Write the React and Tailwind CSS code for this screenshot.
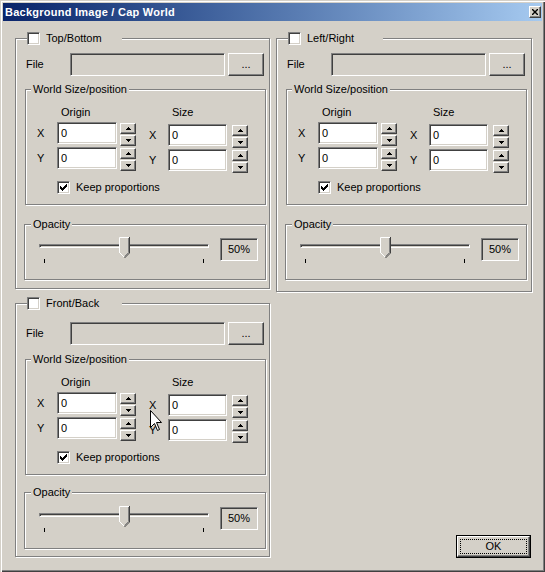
import React from "react";

const raised =
  "bg-[#d4d0c8] border border-t-white border-l-white border-r-[#404040] border-b-[#404040] shadow-[inset_-1px_-1px_0_#808080]";
const sunken =
  "border border-t-[#808080] border-l-[#808080] border-r-white border-b-white shadow-[inset_1px_1px_0_#404040,inset_-1px_-1px_0_#d4d0c8]";
const etched = "border border-[#808080] shadow-[inset_1px_1px_0_#fff,1px_1px_0_#fff]";

function CheckBox({ checked }) {
  return (
    <span className={`w-[13px] h-[13px] shrink-0 bg-white flex items-center justify-center ${sunken}`}>
      {checked && (
        <svg width="7" height="7" viewBox="0 0 7 7" shapeRendering="crispEdges">
          <path
            d="M6 0h1v1h-1z M5 1h2v1h-2z M0 2h1v1h-1z M4 2h3v1h-3z M0 3h2v1h-2z M3 3h3v1h-3z M0 4h5v1h-5z M1 5h3v1h-3z M2 6h1v1h-1z"
            fill="#000"
          />
        </svg>
      )}
    </span>
  );
}

function Arrow({ up }) {
  return (
    <svg width="5" height="3" viewBox="0 0 5 3" shapeRendering="crispEdges">
      <path d={up ? "M2 0h1v1h-1z M1 1h3v1h-3z M0 2h5v1h-5z" : "M0 0h5v1h-5z M1 1h3v1h-3z M2 2h1v1h-1z"} fill="#000" />
    </svg>
  );
}

function Spin({ className }) {
  return (
    <div className={`mt-[1px] flex flex-col gap-[1px] ${className}`}>
      <div className={`w-[16px] h-[11px] flex items-center justify-center ${raised}`}>
        <Arrow up />
      </div>
      <div className={`w-[16px] h-[11px] flex items-center justify-center ${raised}`}>
        <Arrow />
      </div>
    </div>
  );
}

function Field({ axis, wide }) {
  return (
    <div className="flex h-[25px]">
      <span className={`${wide ? "w-[20px]" : "w-[19px]"} leading-[22px]`}>{axis}</span>
      <div className={`${wide ? "w-[60px]" : "w-[59px]"} h-[22px] bg-white pl-[3px] leading-[20px] ${sunken}`}>0</div>
      <Spin className={wide ? "ml-[3px]" : "ml-[5px]"} />
    </div>
  );
}

function Slider() {
  return (
    <div className="relative w-[170px] h-[26px]">
      <div className={`mt-[7px] h-[4px] ${sunken}`} />
      <svg className="absolute left-[80px] top-0" width="11" height="21" viewBox="0 0 11 21">
        <polygon points="0,0 11,0 11,16 5.5,21 0,16" fill="#d4d0c8" />
        <path d="M0.5 16 V0.5 H10" stroke="#fff" fill="none" />
        <path d="M0.5 15.5 L5 20" stroke="#fff" fill="none" />
        <path d="M10.5 0 V16 L5.5 21" stroke="#404040" fill="none" />
        <path d="M9.5 1 V15.5 L5.5 19.5" stroke="#808080" fill="none" />
      </svg>
      <span className="absolute left-[5px] top-[22px] w-px h-[4px] bg-black" />
      <span className="absolute left-[164px] top-[22px] w-px h-[4px] bg-black" />
    </div>
  );
}

function GroupBox({ title, size, front }) {
  return (
    <div className={`flex flex-col ${etched} ${size}`}>
      <div className="-mt-[7px] ml-[11px] w-[95px] h-[13px] flex items-center gap-[6px] bg-[#d4d0c8]">
        <CheckBox />
        <span>{title}</span>
      </div>

      <div className={`${front ? "mt-[12px]" : "mt-[8px]"} flex items-center`}>
        <span className="ml-[10px] w-[44px]">File</span>
        <div className={`w-[155px] h-[23px] ${sunken}`} />
        <div className={`ml-[3px] w-[36px] h-[23px] flex items-center justify-center ${raised}`}>...</div>
      </div>

      <div className={`${front ? "mt-[14px]" : "mt-[13px]"} ml-[9px] w-[241px] pb-[10px] ${etched}`}>
        <div className="-mt-[7px] ml-[5px] px-[2px] w-fit bg-[#d4d0c8]">World Size/position</div>
        <div className="mt-[10px] flex">
          <span className="ml-[35px] w-[111px]">Origin</span>
          <span>Size</span>
        </div>
        <div className="mt-[3px] flex">
          <div className="pl-[11px] flex flex-col">
            <Field axis="X" wide />
            <Field axis="Y" wide />
          </div>
          <div className="ml-[13px] mt-[2px] flex flex-col">
            <Field axis="X" />
            <Field axis="Y" />
          </div>
        </div>
        <div className="mt-[7px] ml-[31px] flex items-center gap-[6px]">
          <CheckBox checked />
          <span>Keep proportions</span>
        </div>
      </div>

      <div className={`${front ? "mt-[17px] h-[57px]" : "mt-[19px] h-[56px]"} ml-[8px] w-[242px] ${etched}`}>
        <div className="-mt-[7px] ml-[6px] px-[2px] w-fit bg-[#d4d0c8]">Opacity</div>
        <div className={`${front ? "mt-[7px]" : "mt-[6px]"} pl-[14px] flex items-start`}>
          <Slider />
          <div className="ml-[11px] mt-[1px] w-[38px] h-[23px] flex items-center justify-center border border-t-[#808080] border-l-[#808080] border-r-white border-b-white shadow-[inset_1px_1px_0_#404040]">
            50%
          </div>
        </div>
      </div>
    </div>
  );
}

export default function App() {
  return (
    <div className="relative w-[545px] h-[572px] overflow-hidden bg-[#d4d0c8] px-[3px] pt-[3px] text-[11px] leading-[13px] text-black font-[family-name:'Liberation_Sans',Arial,sans-serif] shadow-[inset_1px_1px_0_#d4d0c8,inset_2px_2px_0_#fff,inset_-1px_-1px_0_#404040,inset_-2px_-2px_0_#808080]">
      <div className="h-[18px] flex items-center pl-[2px] pr-[1px] bg-linear-to-r from-[#0a246a] to-[#a6caf0]">
        <span className="text-white font-bold tracking-[0.25px]">Background Image / Cap World</span>
        <div className={`ml-auto w-[12px] h-[12px] flex items-center justify-center ${raised}`}>
          <svg width="6" height="6" viewBox="0 0 6 6">
            <path d="M0 0 L6 6 M6 0 L0 6" stroke="#000" strokeWidth="1.4" />
          </svg>
        </div>
      </div>

      <div className="grid grid-cols-[256px_256px] gap-x-[5px] gap-y-[11px] pl-[12px] pt-[17px] items-start">
        <GroupBox title="Top/Bottom" size="w-[255px] h-[251px]" />
        <GroupBox title="Left/Right" size="w-[256px] h-[254px]" />
        <GroupBox title="Front/Back" size="w-[255px] h-[254px]" front />
        <div className="self-end justify-self-end mr-[1px] -mb-[1px] w-[75px] h-[23px] border border-black">
          <div className={`h-full p-[2px] ${raised}`}>
            <div className="h-full border border-dotted border-black flex items-center justify-center">OK</div>
          </div>
        </div>
      </div>

      <svg className="absolute left-[150px] top-[410px]" width="13" height="22" viewBox="0 0 13 22">
        <path d="M0.5 0.5 V17.5 L4.5 13.5 L7.5 20.5 L9.5 19.5 L6.5 12.5 L11.5 12.5 Z" fill="#fff" stroke="#000" />
      </svg>
    </div>
  );
}
